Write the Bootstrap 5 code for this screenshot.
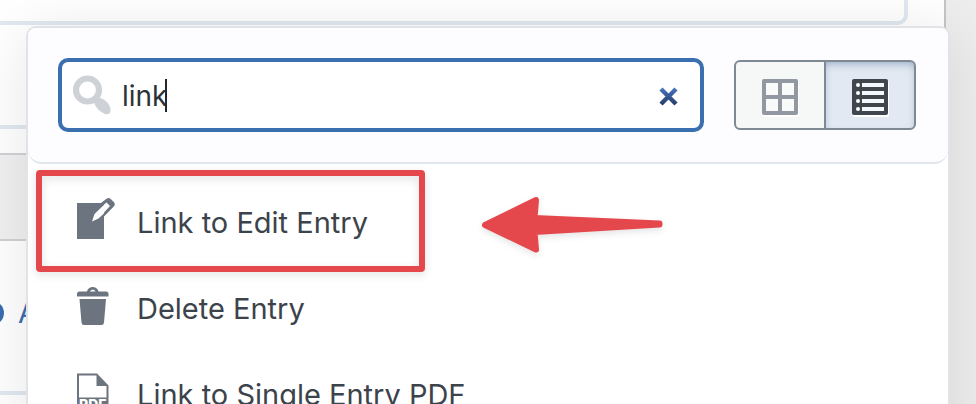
<!DOCTYPE html>
<html lang="en">
<head>
<meta charset="utf-8">
<meta name="viewport" content="width=device-width, initial-scale=1">
<title>Field actions</title>
<link rel="stylesheet" href="https://cdn.jsdelivr.net/npm/bootstrap@5.3.0/dist/css/bootstrap.min.css">
<style>
body { font-family: Inter, "Liberation Sans", sans-serif; background: #ededed; color: #3c434a; }
.editor { min-height: 100vh; margin-right: 30px; background: #fff; border-right: 2px solid #c3c4c7; }
.editor-field { height: 25px; margin-right: 36px; border: solid #e1e8f0; border-width: 0 4px 4px 0; border-bottom-right-radius: 10px; }
.editor-rule { height: 104px; border-bottom: 4px solid #e1e8f0; }
.editor-bar { height: 88px; margin-top: 24px; background: #f0f0f1; border: solid #d0d1d4; border-width: 2px 0; }
.editor-add { height: 154px; padding-bottom: 6px; border-bottom: 4px solid #e1e8f0; font-size: 29px; color: #3a6eb0; text-decoration: none; }
.add-dot { width: 24px; height: 24px; margin-left: -20px; margin-right: 14px; background: #3a6eb0; }
.picker { top: 26px; left: 26px; right: 26px; background: #fff; border: 2px solid #e2e3e7; border-radius: 10px; box-shadow: 0 6px 60px rgba(0,0,0,.1); }
.picker-head { padding: 30px 32px 30px 30px; gap: 30px; background: #fdfdff; border-bottom: 2px solid #e1e6ee; border-radius: 8px 8px 14px 14px; }
.search { height: 74px; border: 4px solid #3a6fb0; border-radius: 10px; background: #fff; padding: 2px 20px 0 10px; }
.search input { font-size: 28px; color: #2c3338; outline: 0; padding: 0 0 0 10px; min-width: 0; }
.caret { left: 103px; top: 17px; width: 2px; height: 33px; background: #23282d; }
.clear { width: 22px; height: 22px; }
.views { height: 70px; }
.views button { width: 92px; padding: 4px 0 0; border: 2px solid #7e8993; background: #f6f8f8; }
.views button:first-child { border-radius: 6px 0 0 6px; }
.views button:last-child { border-radius: 0 6px 6px 0; margin-left: -2px; background: #e3e9f2; box-shadow: inset 0 4px 10px -3px #8da4c2; }
.actions { padding: 16px 0; }
.actions button { height: 86px; padding-left: 49px; gap: 20px; font-size: 29px; color: #3c434a; }
.actions svg { fill: #6c757f; }
.highlight { left: 36px; top: 170px; width: 389px; height: 102px; border: 6px solid #e5484c; border-radius: 4px; pointer-events: none; filter: drop-shadow(0 3px 4px rgba(0,0,0,.12)); }
.pointer { left: 476px; top: 190px; filter: drop-shadow(0 3px 3px rgba(0,0,0,.1)); }
</style>
<script src="https://cdn.jsdelivr.net/npm/bootstrap@5.3.0/dist/js/bootstrap.bundle.min.js"></script>
</head>
<body class="vh-100 overflow-hidden position-relative">
<main class="editor">
  <div class="editor-field"></div>
  <div class="editor-rule"></div>
  <div class="editor-bar"></div>
  <a class="editor-add d-flex align-items-center" href="#"><span class="add-dot rounded-circle"></span>Add</a>
</main>

<section class="picker position-absolute" aria-label="Add field">
  <div class="picker-head d-flex align-items-center">
    <div class="search flex-grow-1 d-flex align-items-center position-relative">
      <svg width="40" height="42" viewBox="0 0 40 42" aria-hidden="true">
        <circle cx="15.500" cy="15" r="11.500" fill="none" stroke="#ced1d6" stroke-width="6.200"/>
        <path d="M22 27c1 5 6 10 11 12 4 1 6-1 5.500-5-1-6-7-11-12-11.500z" fill="#ced1d6"/>
      </svg>
      <input class="border-0 bg-transparent flex-grow-1" type="text" value="link" aria-label="Search fields">
      <span class="caret position-absolute"></span>
      <button class="clear btn border-0 p-0 d-flex align-items-center justify-content-center" type="button" aria-label="Clear search">
        <svg width="22" height="22" viewBox="0 0 22 22">
          <defs><linearGradient id="clearTone" x1="0" y1="2" x2="0" y2="20" gradientUnits="userSpaceOnUse"><stop stop-color="#4a78c4"/><stop offset="1" stop-color="#263b69"/></linearGradient></defs>
          <path d="M3 4 18 19M18 4 3 19" stroke="url(#clearTone)" stroke-width="4.400"/>
        </svg>
      </button>
    </div>
    <div class="views d-flex" role="group" aria-label="View">
      <button class="d-flex align-items-center justify-content-center" type="button" aria-label="Grid view">
        <svg width="40" height="40" viewBox="0 0 40 40"><rect x="3" y="4" width="36" height="36" rx="2" fill="#fff"/><rect x="2" y="2" width="36" height="36" rx="2" fill="#9298a1"/><path d="M6 6h12v12H6zM22 6h12v12H22zM6 22h12v12H6zM22 22h12v12H22z" fill="#f9fafa"/></svg>
      </button>
      <button class="d-flex align-items-center justify-content-center" type="button" aria-label="List view" aria-pressed="true">
        <svg width="40" height="40" viewBox="0 0 40 40"><rect x="3" y="4" width="36" height="36" rx="2" fill="#fff"/><rect x="2" y="2" width="36" height="36" rx="2" fill="#40464d"/><path d="M12 6h22v4H12zM12 14h22v4H12zM12 22h22v4H12zM12 30h22v4H12z" fill="#f4f7fb"/><g fill="#fff"><circle cx="8" cy="8" r="2"/><circle cx="8" cy="16" r="2"/><circle cx="8" cy="24" r="2"/><circle cx="8" cy="32" r="2"/></g></svg>
      </button>
    </div>
  </div>
  <div class="actions d-flex flex-column">
    <button class="btn border-0 rounded-0 py-0 pe-0 d-flex align-items-center text-start" type="button">
      <svg width="40" height="50" viewBox="0 0 40 50" aria-hidden="true">
        <path d="M0 5h27v36H0z"/>
        <path d="M15 23.500 17.500 16 31 3l4.500 4.500L21.500 20.500z" fill="#fff"/>
        <path d="M24 5 29.500.800q2-1.500 4 0l3.500 3.500q1.500 2 0 4L27 18.500v-4l6-6.500-3.500-3.500L24 9z"/>
      </svg>
      Link to Edit Entry
    </button>
    <button class="btn border-0 rounded-0 py-0 pe-0 d-flex align-items-center text-start" type="button">
      <svg width="40" height="46" viewBox="0 0 40 46" aria-hidden="true">
        <path d="M0 10.500V8q0-2.500 2.500-2.500H10C11-.5 20.500-.5 21.500 5.500H29Q31.500 5.500 31.500 8v2.500zM13 5.500h5.500C17.500 3 14 3 13 5.500zM2.500 13h26.500l-2 23.500q-.2 2.500-2.500 2.500H7q-2.300 0-2.500-2.500z"/>
      </svg>
      Delete Entry
    </button>
    <button class="btn border-0 rounded-0 py-0 pe-0 d-flex align-items-center text-start" type="button">
      <svg width="40" height="46" viewBox="0 0 40 46" aria-hidden="true">
        <path d="M0 1.500h20l11.500 12V44.500H0zM2 3.500V25.500h27.500V14H19.500V3.500z" fill-rule="evenodd"/>
        <text x="2" y="38" font-family="Inter, sans-serif" font-size="14" font-weight="800" style="fill:#fff">PDF</text>
      </svg>
      Link to Single Entry PDF
    </button>
  </div>
</section>

<div class="highlight position-absolute"></div>
<svg class="pointer position-absolute" width="200" height="70" viewBox="0 0 200 70" aria-hidden="true">
  <path d="M9 35 60 10 58.500 28 183.500 33.500v1L58.500 42 60 59.500z" fill="#e5484c" stroke="#e5484c" stroke-width="6" stroke-linejoin="round"/>
</svg>
</body>
</html>
